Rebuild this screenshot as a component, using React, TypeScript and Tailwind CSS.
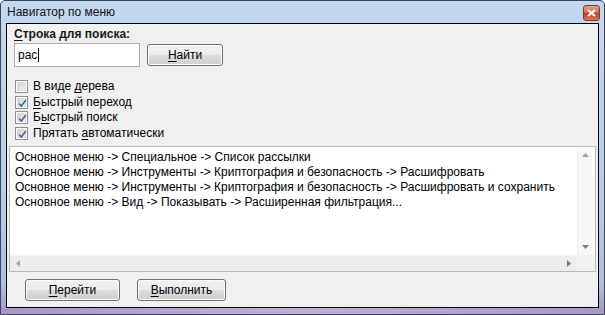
import React from "react";

const F = { fontFamily: '"Liberation Sans", Arial, sans-serif' };

function U({ children }: { children: React.ReactNode }) {
  return <span className="underline underline-offset-2 decoration-1">{children}</span>;
}

function Check({ checked }: { checked: boolean }) {
  return (
    <div className="w-[13px] h-[13px] border border-[#8e8f8f] bg-white p-[1px] shrink-0">
      <div className="relative w-full h-full bg-[linear-gradient(135deg,#cbcfd5_0%,#f4f4f4_100%)] border border-[#d8dbe0]">
        {checked && (
          <svg className="absolute left-[-1px] top-[-1px]" width="11" height="11" viewBox="0 0 11 11">
            <path d="M2 5.5 L4.3 8 L9 2" fill="none" stroke="#3a5e9c" strokeWidth="1.5" />
          </svg>
        )}
      </div>
    </div>
  );
}

function Btn({ children, w }: { children: React.ReactNode; w: string }) {
  return (
    <div
      className={`${w} h-[22px] border border-[#707070] rounded-[3px] flex items-center justify-center text-[12px] text-black shadow-[inset_0_0_0_1px_#fcfcfc] bg-[linear-gradient(to_bottom,#f2f2f2_0%,#ebebeb_50%,#dddddd_50%,#cfcfcf_100%)]`}
    >
      {children}
    </div>
  );
}

export default function App() {
  const lines = [
    "Основное меню -> Специальное -> Список рассылки",
    "Основное меню -> Инструменты -> Криптография и безопасность -> Расшифровать",
    "Основное меню -> Инструменты -> Криптография и безопасность -> Расшифровать и сохранить",
    "Основное меню -> Вид -> Показывать -> Расширенная фильтрация...",
  ];
  return (
    <div style={F} className="w-[605px] h-[315px] text-[12px] text-black">
      <div className="w-full h-full flex flex-col border border-[#3a4656] rounded-t-[5px] bg-[linear-gradient(to_bottom,#c3d8ef_0%,#b8cfe9_60%,#aec2df_90%,#a896c6_100%)]">
        {/* title bar */}
        <div className="h-[22px] flex items-start justify-between pl-[6px] pr-[4px]">
          <div className="pt-[4px] leading-[15px] text-[12px] text-[#111]">Навигатор по меню</div>
          <div className="mt-[4px] w-[17px] h-[16px] rounded-[3px] border border-[#7a3a30] bg-[linear-gradient(to_bottom,#e8a08c_0%,#d06a50_45%,#c0402a_55%,#d8785a_100%)] flex items-center justify-center">
            <svg width="9" height="8" viewBox="0 0 9 8">
              <path d="M1 1 L8 7 M8 1 L1 7" stroke="#fff" strokeWidth="2.2" />
            </svg>
          </div>
        </div>
        {/* client */}
        <div className="flex-1 mx-[5px] border border-black bg-[#f0f0f0] flex flex-col">
          <div className="pl-[7px] mt-[3px] h-[15px] leading-[15px] font-bold text-[#1a1a1a]">
            <U>С</U>трока для поиска:
          </div>
          <div className="pl-[7px] mt-[1px] flex items-start gap-[7px]">
            <div className="w-[126px] h-[24px] border border-[#abadb3] bg-white flex items-center pl-[3px]">
              рас<span className="inline-block w-[1px] h-[14px] bg-black ml-[1px]" />
            </div>
            <div className="mt-[1px]">
              <Btn w="w-[76px]">
                <U>Н</U>айти
              </Btn>
            </div>
          </div>
          <div className="pl-[8px] mt-[12px] flex flex-col">
            {[
              [false, <>В виде <U>д</U>ерева</>],
              [true, <><U>Б</U>ыстрый переход</>],
              [true, <>Б<U>ы</U>стрый поиск</>],
              [true, <>Прятать <U>а</U>втоматически</>],
            ].map(([c, t], i) => (
              <div key={i} className="h-[15.5px] flex items-center gap-[5px] leading-[15px]">
                <Check checked={c as boolean} />
                <span>{t as React.ReactNode}</span>
              </div>
            ))}
          </div>
          <div className="mx-[2px] mt-[5px] h-[126px] border border-[#b9b9b9] bg-white flex flex-col">
            <div className="flex-1 flex min-h-0">
              <div className="flex-1 pl-[5px] pt-[3px] overflow-hidden whitespace-nowrap">
                {lines.map((l, i) => (
                  <div key={i} className="h-[15px] leading-[15px]">
                    {l}
                  </div>
                ))}
              </div>
              <div className="w-[16px] mr-[2px] bg-[#f7f7f7] border-l border-[#ededed] flex flex-col items-center justify-between py-[6px]">
                <svg width="7" height="4" viewBox="0 0 7 4">
                  <path d="M0 4 L3.5 0 L7 4 Z" fill="#a0a0a0" />
                </svg>
                <svg width="7" height="4" viewBox="0 0 7 4">
                  <path d="M0 0 L3.5 4 L7 0 Z" fill="#7a7a7a" />
                </svg>
              </div>
            </div>
            <div className="h-[16px] flex">
              <div className="flex-1 bg-[#ececec] border-t border-[#f6f6f6] flex items-center justify-between px-[6px]">
                <svg width="4" height="7" viewBox="0 0 4 7">
                  <path d="M4 0 L0 3.5 L4 7 Z" fill="#a8a8a8" />
                </svg>
                <svg width="4" height="7" viewBox="0 0 4 7">
                  <path d="M0 0 L4 3.5 L0 7 Z" fill="#7a7a7a" />
                </svg>
              </div>
              <div className="w-[18px] bg-[#f0f0f0]" />
            </div>
          </div>
          <div className="pl-[18px] mt-[7px] flex gap-[17px]">
            <Btn w="w-[95px]">
              <U>П</U>ерейти
            </Btn>
            <Btn w="w-[89px]">
              <U>В</U>ыполнить
            </Btn>
          </div>
        </div>
        <div className="h-[6px] bg-[linear-gradient(to_right,#a898c8,#c0aedb_50%,#a898c8)]" />
      </div>
    </div>
  );
}
